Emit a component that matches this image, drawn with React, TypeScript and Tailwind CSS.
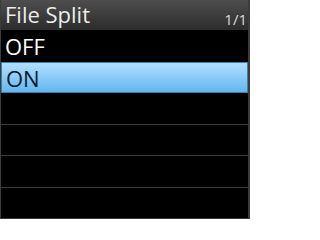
const rows = [
  { label: "OFF", h: "h-[32px]" },
  { label: "ON", h: "h-[31px]", selected: true },
  { label: "", h: "h-[32px]" },
  { label: "", h: "h-[31px]" },
  { label: "", h: "h-[32px]" },
  { label: "", h: "h-[31px]" },
];

export default function App() {
  return (
    <div
      className="w-[250px] h-[219px] bg-black overflow-hidden flex flex-col border-l border-r-2 border-[#3c3c3c]"
      style={{ fontFamily: '"Open Sans", "Noto Sans", sans-serif' }}
    >
      <div className="h-[30px] shrink-0 flex items-end justify-between pl-[4px] pr-[1px] bg-gradient-to-b from-[#4e4e4e] to-[#2c2c2c]">
        <span className="text-[22px] leading-[31px] text-[#ececec]">File Split</span>
        <span className="text-[15px] leading-none mb-[3px] text-[#d8d8d8]">1/1</span>
      </div>
      {rows.map((r, i) => (
        <div
          key={i}
          className={`${r.h} shrink-0 flex items-center ${
            i >= 2 ? "border-b border-[#3a3a3a]" : ""
          }`}
        >
          {r.selected ? (
            <div className="h-full w-full flex items-center pl-[4px] border border-[#3d7fa8] bg-gradient-to-b from-[#b0e0ff] to-[#62b6ef]">
              <span className="text-[22px] text-[#07182a] leading-none">{r.label}</span>
            </div>
          ) : (
            <span className="pl-[4px] text-[22px] text-white leading-none">{r.label}</span>
          )}
        </div>
      ))}
    </div>
  );
}
